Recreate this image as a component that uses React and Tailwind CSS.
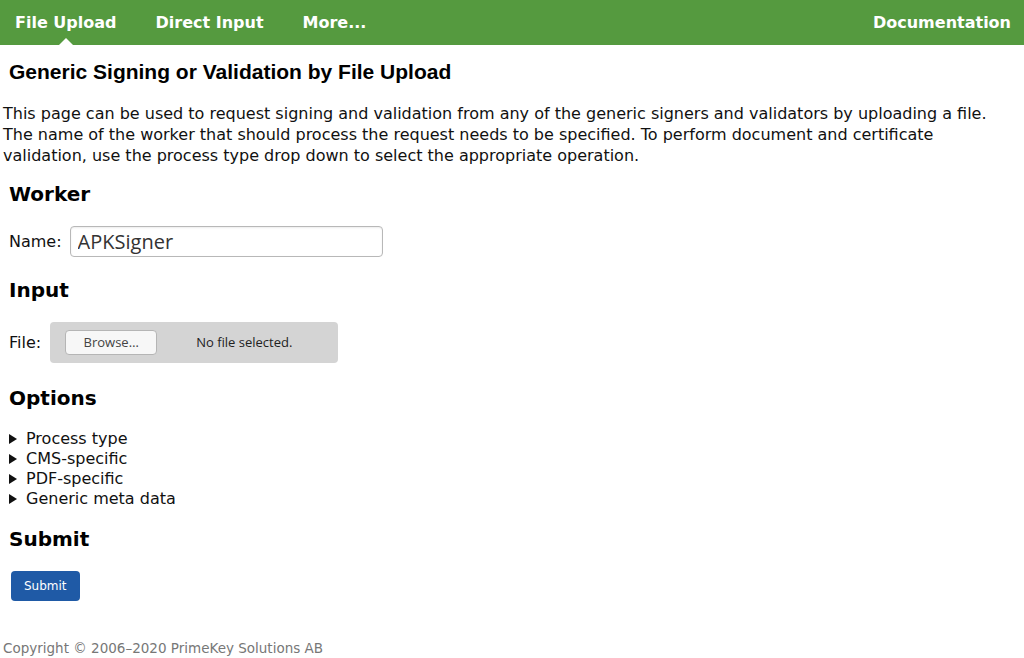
import React from 'react';

const body = "font-['DejaVu_Sans',Verdana,sans-serif]";
const gtk = "font-['Open_Sans','Noto_Sans',sans-serif]";

const navItems = ['File Upload', 'Direct Input', 'More...'];
const optionGroups = ['Process type', 'CMS-specific', 'PDF-specific', 'Generic meta data'];

function SectionTitle({ children, className = '' }) {
  return <h2 className={`text-[20px] font-bold text-black leading-6 pl-[9px] ${className}`}>{children}</h2>;
}

export default function App() {
  return (
    <div className={`${body} bg-white min-h-[658px] w-[1024px] text-[#111] text-[16px]`}>
      {/* Top navigation */}
      <nav className="h-[45px] bg-[#559a3f] flex items-center justify-between pl-[15px] pr-[13px] text-white font-bold text-[16px]">
        <ul className="flex gap-[39px]">
          {navItems.map((item, i) => (
            <li key={item} className="relative h-[45px] flex items-center">
              {item}
              {i === 0 && (
                <span className="absolute bottom-0 left-1/2 -translate-x-1/2 w-0 h-0 border-l-[7px] border-r-[7px] border-b-[7px] border-l-transparent border-r-transparent border-b-white" />
              )}
            </li>
          ))}
        </ul>
        <span>Documentation</span>
      </nav>

      <h1 className="font-['Liberation_Sans',Arial,sans-serif] font-bold text-[21px] leading-6 pl-[9px] pt-[15px] text-black">
        Generic Signing or Validation by File Upload
      </h1>

      <p className="pl-[3px] pr-4 mt-[19px] leading-[21px] text-[16px]">
        This page can be used to request signing and validation from any of the generic signers and validators by uploading a file.
        The name of the worker that should process the request needs to be specified. To perform document and certificate validation,
        use the process type drop down to select the appropriate operation.
      </p>

      <SectionTitle className="mt-[16px]">Worker</SectionTitle>
      <div className="flex items-center pl-[9px] mt-[20px] gap-2">
        <label>Name:</label>
        <input
          readOnly
          value="APKSigner"
          className={`${gtk} w-[313px] h-[31px] border border-[#b8b8b8] rounded-[4px] px-[7px] text-[20px] text-[#333] shadow-[inset_0_1px_2px_rgba(0,0,0,0.08)] outline-none`}
        />
      </div>

      <SectionTitle className="mt-[21px]">Input</SectionTitle>
      <div className="flex items-center pl-[9px] mt-[20px] gap-[9px]">
        <label>File:</label>
        <div className="w-[288px] h-[41px] bg-[#d4d4d4] rounded-[4px] flex items-center pl-[15px] gap-[39px]">
          <button className={`${gtk} w-[92px] h-[25px] bg-[#f7f7f7] border border-[#b5b5b5] rounded-[4px] text-[13px] text-[#444]`}>
            Browse…
          </button>
          <span className={`${gtk} text-[13px] text-[#222]`}>No file selected.</span>
        </div>
      </div>

      <SectionTitle className="mt-[23px]">Options</SectionTitle>
      <ul className="mt-[19px] pl-[9px]">
        {optionGroups.map((g) => (
          <li key={g} className="flex items-center leading-[20px]">
            <span className="w-0 h-0 border-t-[5px] border-b-[5px] border-l-[8px] border-t-transparent border-b-transparent border-l-[#111] mr-[9px]" />
            {g}
          </li>
        ))}
      </ul>

      <SectionTitle className="mt-[18px]">Submit</SectionTitle>
      <div className="pl-[11px] mt-[20px]">
        <button className="h-[30px] px-[13px] bg-[#1f5aa6] text-white text-[12px] rounded-[4px]">Submit</button>
      </div>

      <footer className="pl-[3px] mt-[37px] text-[13.5px] text-[#777]">Copyright © 2006–2020 PrimeKey Solutions AB</footer>
    </div>
  );
}
